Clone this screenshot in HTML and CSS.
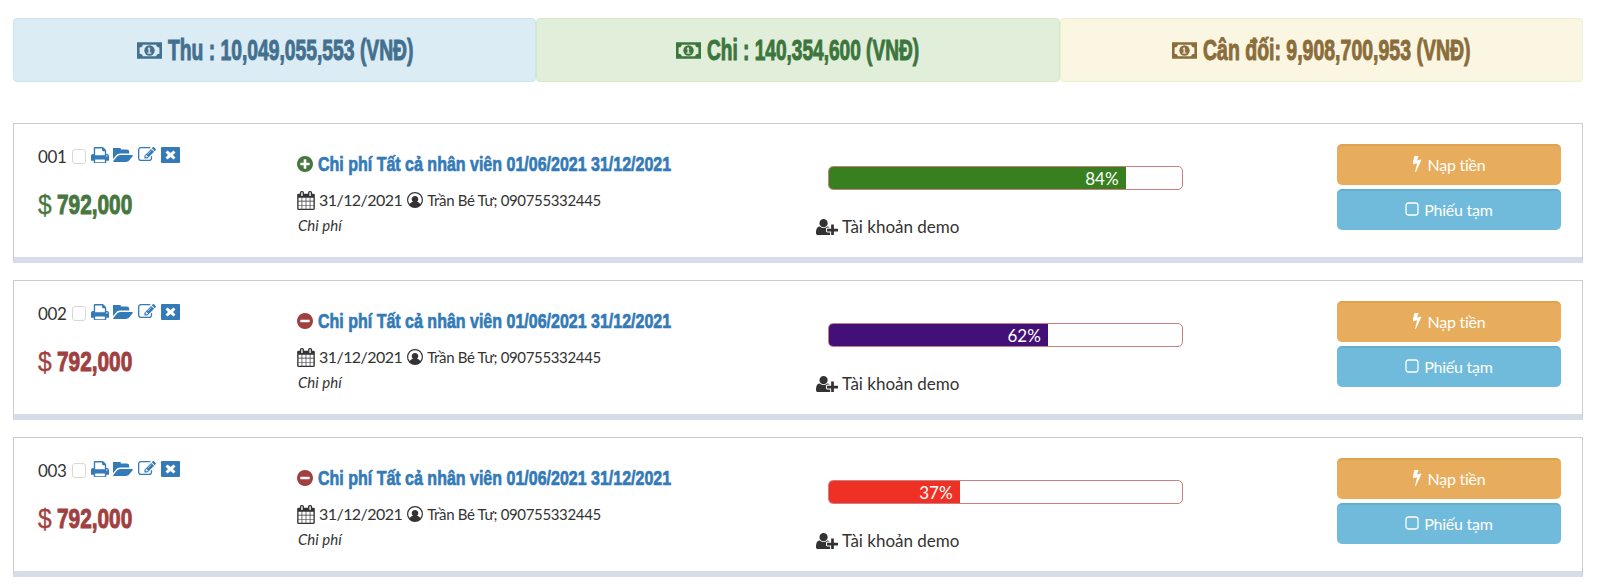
FILE: index.html
```html
<!DOCTYPE html>
<html lang="vi">
<head>
<meta charset="utf-8">
<title>Thu chi</title>
<link rel="stylesheet" href="styles.css">
</head>
<body>
<svg class="defs" width="0" height="0" aria-hidden="true">
  <symbol id="i-money" viewBox="0 0 24 16"><path fill-rule="evenodd" d="M0 0h24v16H0zM2.500 5v6q3 0 3 2.500h13q0-2.500 3-2.500V5q-3 0-3-2.500h-13q0 2.500-3 2.500z"/><circle cx="12" cy="8" r="5"/><path class="money-one" d="M10.800 5h1.800v5h1.200v1.200H10V10h1V6.800h-1z"/></symbol>
  <symbol id="i-plus" viewBox="128 128 1536 1536"><path d="M1344 960v-128q0-26-19-45t-45-19h-256v-256q0-26-19-45t-45-19h-128q-26 0-45 19t-19 45v256h-256q-26 0-45 19t-19 45v128q0 26 19 45t45 19h256v256q0 26 19 45t45 19h128q26 0 45-19t19-45v-256h256q26 0 45-19t19-45zm320-64q0 209-103 385.500t-279.500 279.500-385.500 103-385.500-103-279.500-279.500-103-385.500 103-385.500 279.500-279.500 385.500-103 385.500 103 279.500 279.500 103 385.500z"/></symbol>
  <symbol id="i-minus" viewBox="128 128 1536 1536"><path d="M1344 960v-128q0-26-19-45t-45-19h-768q-26 0-45 19t-19 45v128q0 26 19 45t45 19h768q26 0 45-19t19-45zm320-64q0 209-103 385.500t-279.500 279.500-385.500 103-385.500-103-279.500-279.500-103-385.500 103-385.500 279.500-279.500 385.500-103 385.500 103 279.500 279.500 103 385.500z"/></symbol>
  <symbol id="i-print" viewBox="64 128 1664 1536"><path d="M448 1536h896v-256h-896v256zm0-640h896v-384h-160q-40 0-68-28t-28-68v-160h-640v640zm1152 64q0-26-19-45t-45-19-45 19-19 45 19 45 45 19 45-19 19-45zm128 0v416q0 13-9.500 22.500t-22.500 9.500h-224v160q0 40-28 68t-68 28h-960q-40 0-68-28t-28-68v-160h-224q-13 0-22.500-9.500t-9.500-22.500v-416q0-79 56.500-135.500t135.500-56.500h64v-544q0-40 28-68t68-28h672q40 0 88 20t76 48l152 152q28 28 48 76t20 88v256h64q79 0 135.500 56.500t56.500 135.500z"/></symbol>
  <symbol id="i-folder" viewBox="0 256 1815 1280"><path d="M1815 952q0 31-31 66l-336 396q-43 51-120.500 86.500t-143.500 35.500h-1088q-34 0-60.500-13t-26.500-43q0-31 31-66l336-396q43-51 120.500-86.500t143.500-35.500h1088q34 0 60.500 13t26.500 43zm-343-344v160h-832q-94 0-197 47.500t-164 119.500l-337 396-5 6q0-4-.5-12.500t-.5-12.500v-960q0-92 66-158t158-66h320q92 0 158 66t66 158v32h544q92 0 158 66t66 158z"/></symbol>
  <symbol id="i-edit" viewBox="0 128 1790 1536"><path d="M888 1184l116-116-152-152-116 116v56h96v96h56zm440-720q-16-16-33 1l-350 350q-17 17-1 33t33-1l350-350q17-17 1-33zm80 594v190q0 119-84.500 203.500t-203.500 84.500h-832q-119 0-203.500-84.500t-84.500-203.500v-832q0-119 84.500-203.500t203.500-84.500h832q63 0 117 25 15 7 18 23 3 17-9 29l-49 49q-14 14-32 8-23-6-45-6h-832q-66 0-113 47t-47 113v832q0 66 47 113t113 47h832q66 0 113-47t47-113v-126q0-13 9-22l64-64q15-15 35-7t20 29zm-96-738l288 288-672 672h-288v-288zm444 132l-92 92-288-288 92-92q28-28 68-28t68 28l152 152q28 28 28 68t-28 68z"/></symbol>
  <symbol id="i-close" viewBox="0 0 19 16"><path fill-rule="evenodd" d="M1 0h17q1 0 1 1v14q0 1-1 1H1q-1 0-1-1V1q0-1 1-1zM6.500 3.500L4.500 5.500 7 8l-2.500 2.500 2 2L9.500 10l3 2.500 2-2L12 8l2.500-2.500-2-2L9.500 6z"/></symbol>
  <symbol id="i-cal" viewBox="0 0 1664 1792"><path d="M128 1664h288v-288h-288v288zm352 0h320v-288h-320v288zm-352-352h288v-320h-288v320zm352 0h320v-320h-320v320zm-352-384h288v-288h-288v288zm736 736h320v-288h-320v288zm-384-736h320v-288h-320v288zm768 736h288v-288h-288v288zm-384-352h320v-320h-320v320zm-352-864v-288q0-13-9.500-22.500t-22.500-9.500h-64q-13 0-22.500 9.500t-9.500 22.500v288q0 13 9.500 22.500t22.500 9.500h64q13 0 22.500-9.500t9.500-22.500zm736 864h288v-320h-288v320zm-384-384h320v-288h-320v288zm384 0h288v-288h-288v288zm32-480v-288q0-13-9.500-22.500t-22.500-9.500h-64q-13 0-22.500 9.500t-9.500 22.500v288q0 13 9.500 22.500t22.500 9.500h64q13 0 22.500-9.500t9.500-22.500zm384-64v1280q0 52-38 90t-90 38h-1408q-52 0-90-38t-38-90v-1280q0-52 38-90t90-38h128v-96q0-66 47-113t113-47h64q66 0 113 47t47 113v96h384v-96q0-66 47-113t113-47h64q66 0 113 47t47 113v96h128q52 0 90 38t38 90z"/></symbol>
  <symbol id="i-user" viewBox="0 0 16 16"><path fill-rule="evenodd" d="M8 0a8 8 0 1 1 0 16A8 8 0 0 1 8 0zm0 1.300a6.700 6.700 0 0 0-5.300 10.800C3.500 10.700 4.800 10 6 9.800a3.300 3.300 0 1 1 4 0c1.200.2 2.500.9 3.300 2.300A6.700 6.700 0 0 0 8 1.300z"/></symbol>
  <symbol id="i-userplus" viewBox="0 128 2048 1536"><path d="M704 896q-159 0-271.500-112.500t-112.500-271.500 112.500-271.500 271.500-112.500 271.500 112.500 112.500 271.500-112.500 271.500-271.500 112.500zm960 128h352q13 0 22.500 9.500t9.500 22.500v192q0 13-9.500 22.500t-22.500 9.500h-352v352q0 13-9.500 22.500t-22.500 9.500h-192q-13 0-22.500-9.500t-9.500-22.500v-352h-352q-13 0-22.500-9.500t-9.500-22.500v-192q0-13 9.500-22.500t22.500-9.500h352v-352q0-13 9.500-22.500t22.500-9.500h192q13 0 22.500 9.500t9.500 22.500v352zm-736 224q0 52 38 90t90 38h256v238q-68 50-171 50h-874q-121 0-194-69t-73-190q0-53 3.500-103.500t14-109 26.500-108.500 43-97.500 62-81 85.500-53.500 111.500-20q19 0 39 17 79 61 154.500 91.500t164.500 30.500 164.500-30.500 154.500-91.500q20-17 39-17 132 0 217 96h-223q-52 0-90 38t-38 90v192z"/></symbol>
  <symbol id="i-bolt" viewBox="500 200 1000 1600"><path d="M1333 566q18 20 7 44l-540 1157q-13 25-42 25-4 0-14-2-17-5-25.500-19t-4.500-30l197-808-406 101q-4 1-12 1-18 0-31-11-18-15-13-39l201-825q4-14 16-23t28-9h328q19 0 32 12.500t13 29.500q0 8-5 18l-171 463 396-98q8-2 12-2 19 0 34 15z"/></symbol>
  <symbol id="i-square" viewBox="0 0 14 14"><rect x="1" y="1" width="12" height="12" rx="2.500" fill="none" stroke="currentColor" stroke-width="1.300"/></symbol>
</svg>

<section class="summary">
  <div class="stat stat-in"><svg class="ico-money"><use href="#i-money"/></svg><span class="heavy">Thu : 10,049,055,553 (VNĐ)</span></div>
  <div class="stat stat-out"><svg class="ico-money"><use href="#i-money"/></svg><span class="heavy">Chi : 140,354,600 (VNĐ)</span></div>
  <div class="stat stat-bal"><svg class="ico-money"><use href="#i-money"/></svg><span class="heavy">Cân đối: 9,908,700,953 (VNĐ)</span></div>
</section>

<main class="list">
  <article class="card">
    <div class="col-id">
      <div class="tools"><span class="num">001</span><span class="check"></span><svg class="t-print"><use href="#i-print"/></svg><svg class="t-folder"><use href="#i-folder"/></svg><svg class="t-edit"><use href="#i-edit"/></svg><svg class="t-close"><use href="#i-close"/></svg></div>
      <div class="amount pos"><span class="cur">$</span><span class="heavy">792,000</span></div>
    </div>
    <div class="col-info">
      <h3 class="title"><svg class="ico-sign pos"><use href="#i-plus"/></svg><span class="heavy">Chi phí Tất cả nhân viên 01/06/2021 31/12/2021</span></h3>
      <div class="meta"><svg class="ico-cal"><use href="#i-cal"/></svg><span class="date">31/12/2021</span><svg class="ico-user"><use href="#i-user"/></svg><span class="who">Trần Bé Tư; 090755332445</span></div>
      <div class="type">Chi phí</div>
    </div>
    <div class="col-progress">
      <div class="bar"><div class="fill fill-green" style="width:84%">84%</div></div>
      <div class="owner"><svg class="ico-up"><use href="#i-userplus"/></svg>Tài khoản demo</div>
    </div>
    <div class="col-actions">
      <button class="btn btn-orange"><svg class="ico-bolt"><use href="#i-bolt"/></svg>Nạp tiền</button>
      <button class="btn btn-blue"><svg class="ico-sq"><use href="#i-square"/></svg>Phiếu tạm</button>
    </div>
  </article>

  <article class="card">
    <div class="col-id">
      <div class="tools"><span class="num">002</span><span class="check"></span><svg class="t-print"><use href="#i-print"/></svg><svg class="t-folder"><use href="#i-folder"/></svg><svg class="t-edit"><use href="#i-edit"/></svg><svg class="t-close"><use href="#i-close"/></svg></div>
      <div class="amount neg"><span class="cur">$</span><span class="heavy">792,000</span></div>
    </div>
    <div class="col-info">
      <h3 class="title"><svg class="ico-sign neg"><use href="#i-minus"/></svg><span class="heavy">Chi phí Tất cả nhân viên 01/06/2021 31/12/2021</span></h3>
      <div class="meta"><svg class="ico-cal"><use href="#i-cal"/></svg><span class="date">31/12/2021</span><svg class="ico-user"><use href="#i-user"/></svg><span class="who">Trần Bé Tư; 090755332445</span></div>
      <div class="type">Chi phí</div>
    </div>
    <div class="col-progress">
      <div class="bar"><div class="fill fill-purple" style="width:62%">62%</div></div>
      <div class="owner"><svg class="ico-up"><use href="#i-userplus"/></svg>Tài khoản demo</div>
    </div>
    <div class="col-actions">
      <button class="btn btn-orange"><svg class="ico-bolt"><use href="#i-bolt"/></svg>Nạp tiền</button>
      <button class="btn btn-blue"><svg class="ico-sq"><use href="#i-square"/></svg>Phiếu tạm</button>
    </div>
  </article>

  <article class="card">
    <div class="col-id">
      <div class="tools"><span class="num">003</span><span class="check"></span><svg class="t-print"><use href="#i-print"/></svg><svg class="t-folder"><use href="#i-folder"/></svg><svg class="t-edit"><use href="#i-edit"/></svg><svg class="t-close"><use href="#i-close"/></svg></div>
      <div class="amount neg"><span class="cur">$</span><span class="heavy">792,000</span></div>
    </div>
    <div class="col-info">
      <h3 class="title"><svg class="ico-sign neg"><use href="#i-minus"/></svg><span class="heavy">Chi phí Tất cả nhân viên 01/06/2021 31/12/2021</span></h3>
      <div class="meta"><svg class="ico-cal"><use href="#i-cal"/></svg><span class="date">31/12/2021</span><svg class="ico-user"><use href="#i-user"/></svg><span class="who">Trần Bé Tư; 090755332445</span></div>
      <div class="type">Chi phí</div>
    </div>
    <div class="col-progress">
      <div class="bar"><div class="fill fill-red" style="width:37%">37%</div></div>
      <div class="owner"><svg class="ico-up"><use href="#i-userplus"/></svg>Tài khoản demo</div>
    </div>
    <div class="col-actions">
      <button class="btn btn-orange"><svg class="ico-bolt"><use href="#i-bolt"/></svg>Nạp tiền</button>
      <button class="btn btn-blue"><svg class="ico-sq"><use href="#i-square"/></svg>Phiếu tạm</button>
    </div>
  </article>
</main>
</body>
</html>
```

FILE: styles.css
```css
* { box-sizing: border-box; }
html, body { height: 587px; overflow: hidden; }
body {
  margin: 0;
  padding: 18px 17px 0 13px;
  background: #fff;
  color: #333;
  font-family: "Lato", "Liberation Sans", sans-serif;
  font-size: 16px;
}
.defs { position: absolute; }
svg { fill: currentColor; flex: none; }
.money-one { fill: #fff; opacity: .75; }

/* Condensed heavy display type: a bold face narrowed to the box width */
.heavy {
  display: block;
  font-family: "Liberation Sans", sans-serif;
  font-weight: 700;
  white-space: nowrap;
  transform-origin: left center;
  -webkit-text-stroke: 1px currentColor;
}

.summary { display: flex; height: 64px; margin-bottom: 41px; }
.stat {
  flex: 1 1 0;
  display: flex;
  align-items: center;
  justify-content: center;
  gap: 6px;
  border: 1px solid;
  border-radius: 4px;
  font-size: 29px;
}
.stat-in { background: #dbecf5; border-color: #c9e6f0; color: #44708f; }
.stat-out { background: #e0eeda; border-color: #d6e9c6; color: #3c763d; }
.stat-bal { background: #faf6e2; border-color: #eef0d2; color: #8a6d3b; }
.stat-in .heavy { width: 245px; transform: scaleX(.665); }
.stat-out .heavy { width: 212px; transform: scaleX(.658); }
.stat-bal .heavy { width: 268px; transform: scaleX(.672); }
.ico-money { width: 25px; height: 17px; }

.list { display: flex; flex-direction: column; gap: 17px; }
.card {
  height: 140px;
  display: grid;
  grid-template-columns: 283px 516px 524px 224px;
  padding-top: 20px;
  border: 1px solid #ccc;
  border-bottom: 6px solid #d6dce8;
}
.col-id { padding-left: 24px; }
.tools { display: flex; align-items: center; height: 20px; margin-top: 1px; }
.num { font-size: 17px; letter-spacing: -.3px; margin: 2px 5px 0 0; }
.check {
  width: 14px; height: 15px;
  border: 1px solid #d8d8d8;
  border-radius: 3px;
  margin: 3px 5px 0 0;
}
.tools svg { color: #337ab7; margin-right: 5px; }
.tools .t-print { width: 18px; height: 16.600px; margin-right: 4px; }
.t-folder { width: 20px; height: 14px; }
.t-edit { width: 18px; height: 15.400px; }
.t-close { width: 19px; height: 16px; }
.amount { margin-top: 24px; font-size: 28px; line-height: 32px; display: flex; gap: 5px; }
.amount .heavy { width: 75px; transform: scaleX(.743); }
.cur { width: 14px; font-family: "Liberation Sans", sans-serif; transform: scaleX(.88); transform-origin: left center; -webkit-text-stroke: 0.3px currentColor; }
.pos { color: #47773f; }
.neg { color: #a04040; }

.col-info { padding-top: 8px; }
.title { margin: 0; font-size: 21px; line-height: 24px; color: #337ab7; display: flex; align-items: center; gap: 5px; }
.title .heavy { width: 353px; transform: scaleX(.762); -webkit-text-stroke-width: .7px; }
.ico-sign { width: 16px; height: 16px; }
.meta { margin-top: 14px; display: flex; align-items: center; font-size: 16px; line-height: 20px; }
.date { letter-spacing: -.55px; margin-left: 4px; }
.who { font-size: 15px; letter-spacing: -.35px; margin-left: 4px; }
.ico-cal { width: 18px; height: 19px; }
.ico-user { width: 16px; height: 16px; margin-left: 5px; }
.type { margin: 5px 0 0 1px; font-size: 15px; font-style: italic; line-height: 20px; }

.col-progress { padding-top: 22px; }
.bar {
  margin-left: 15px;
  width: 355px;
  height: 24px;
  border: 1px solid #c77f7f;
  border-radius: 5px;
  overflow: hidden;
  background: #fff;
}
.fill {
  height: 100%;
  color: #fff;
  text-align: right;
  padding-right: 7px;
  font-size: 17px;
  line-height: 24px;
}
.fill-green { background: #38801f; }
.fill-purple { background: #431078; }
.fill-red { background: #ee3124; }
.owner { margin: 25px 0 0 3px; font-size: 17px; line-height: 24px; display: flex; align-items: center; gap: 4px; }
.ico-up { width: 22px; height: 16.500px; }

.col-actions { display: flex; flex-direction: column; gap: 4px; }
.btn {
  height: 41px;
  padding: 0 0 3px;
  border: 0;
  border-top: 2px solid;
  border-radius: 5px;
  color: #fff;
  font: 16px "Lato", "Liberation Sans", sans-serif;
  letter-spacing: -.25px;
  display: flex;
  align-items: center;
  justify-content: center;
  gap: 5px;
}
.btn-orange { background: #e7ad5c; border-color: #dfa24f; }
.btn-blue { background: #70bbdb; border-color: #62afd0; }
.ico-bolt { width: 10px; height: 16px; }
.ico-sq { width: 14px; height: 14px; }
```
